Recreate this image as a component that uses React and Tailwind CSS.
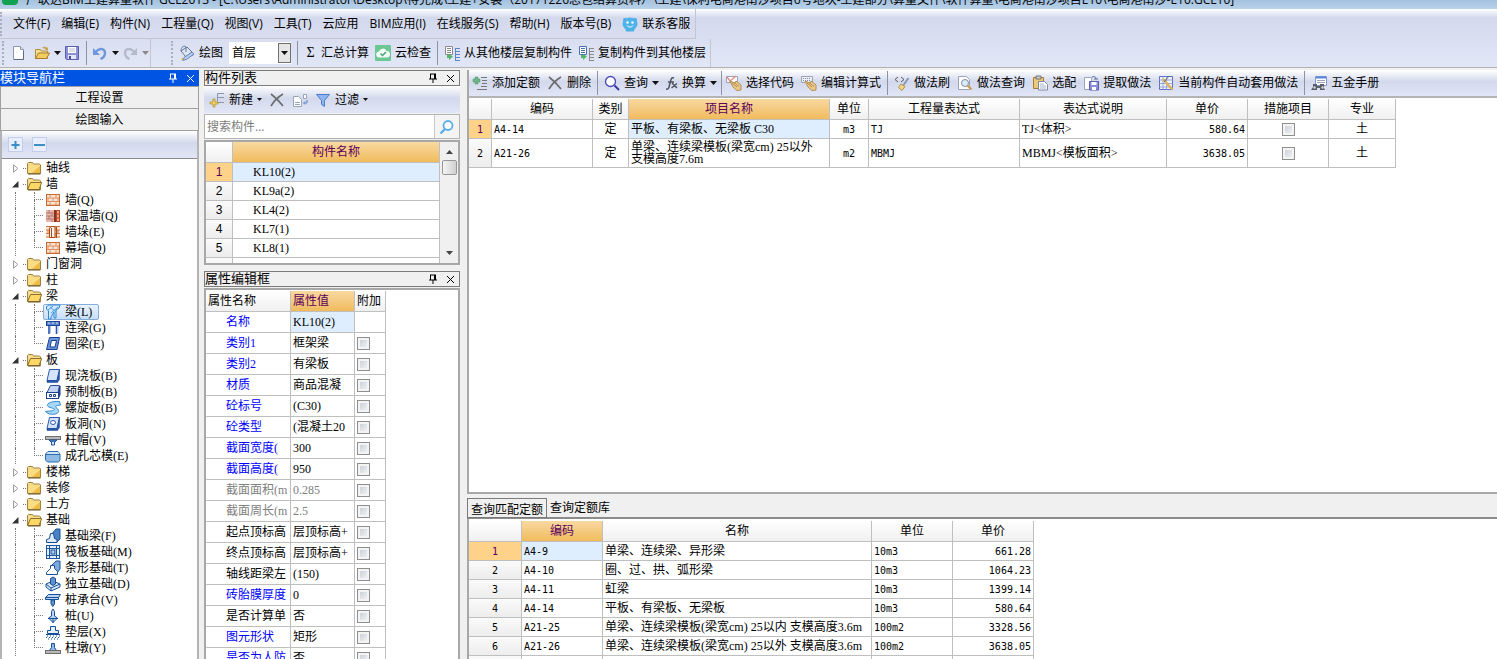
import { useState } from 'react';

const MENU_ITEMS = ['文件(F)', '编辑(E)', '构件(N)', '工程量(Q)', '视图(V)', '工具(T)', '云应用', 'BIM应用(I)', '在线服务(S)', '帮助(H)', '版本号(B)'];

const TREE = [
  { name: '轴线' },
  {
    name: '墙',
    children: [
      { name: '墙(Q)', icon: 'brick' },
      { name: '保温墙(Q)', icon: 'brickInsulated' },
      { name: '墙垛(E)', icon: 'brickPier' },
      { name: '幕墙(Q)', icon: 'brick' },
    ],
  },
  { name: '门窗洞' },
  { name: '柱' },
  {
    name: '梁',
    children: [
      { name: '梁(L)', icon: 'beam' },
      { name: '连梁(G)', icon: 'linkBeam' },
      { name: '圈梁(E)', icon: 'ringBeam' },
    ],
  },
  {
    name: '板',
    children: [
      { name: '现浇板(B)', icon: 'slab' },
      { name: '预制板(B)', icon: 'precast' },
      { name: '螺旋板(B)', icon: 'spiral' },
      { name: '板洞(N)', icon: 'slabHole' },
      { name: '柱帽(V)', icon: 'cap' },
      { name: '成孔芯模(E)', icon: 'core' },
    ],
  },
  { name: '楼梯' },
  { name: '装修' },
  { name: '土方' },
  {
    name: '基础',
    children: [
      { name: '基础梁(F)', icon: 'footBeam' },
      { name: '筏板基础(M)', icon: 'raft' },
      { name: '条形基础(T)', icon: 'strip' },
      { name: '独立基础(D)', icon: 'isolated' },
      { name: '桩承台(V)', icon: 'pileCap' },
      { name: '桩(U)', icon: 'pile' },
      { name: '垫层(X)', icon: 'cushion' },
      { name: '柱墩(Y)', icon: 'pier' },
    ],
  },
];

const COMPONENTS = ['KL10(2)', 'KL9a(2)', 'KL4(2)', 'KL7(1)', 'KL8(1)'];

const PROPS = [
  { name: '名称', value: 'KL10(2)', tone: 'blue', active: true },
  { name: '类别1', value: '框架梁', tone: 'blue' },
  { name: '类别2', value: '有梁板', tone: 'blue' },
  { name: '材质', value: '商品混凝', tone: 'blue' },
  { name: '砼标号', value: '(C30)', tone: 'blue' },
  { name: '砼类型', value: '(混凝土20', tone: 'blue' },
  { name: '截面宽度(', value: '300', tone: 'blue' },
  { name: '截面高度(', value: '950', tone: 'blue' },
  { name: '截面面积(m', value: '0.285', tone: 'gray' },
  { name: '截面周长(m', value: '2.5', tone: 'gray' },
  { name: '起点顶标高', value: '层顶标高+', tone: 'black' },
  { name: '终点顶标高', value: '层顶标高+', tone: 'black' },
  { name: '轴线距梁左', value: '(150)', tone: 'black' },
  { name: '砖胎膜厚度', value: '0', tone: 'blue' },
  { name: '是否计算单', value: '否', tone: 'black' },
  { name: '图元形状', value: '矩形', tone: 'blue' },
  { name: '是否为人防', value: '否', tone: 'blue' },
];

const TONES = { blue: 'text-[#0000ff]', gray: 'text-[#808080]', black: 'text-black' };
const VALUE_TONES = { blue: 'text-black', gray: 'text-[#808080]', black: 'text-black' };

const QUOTAS = [
  { code: 'A4-14', type: '定', name: '平板、有梁板、无梁板 C30', unit: 'm3', expr: 'TJ', note: 'TJ<体积>', price: '580.64', major: '土' },
  { code: 'A21-26', type: '定', name: '单梁、连续梁模板(梁宽cm) 25以外 支模高度7.6m', unit: 'm2', expr: 'MBMJ', note: 'MBMJ<模板面积>', price: '3638.05', major: '土' },
];

const MATCHES = [
  ['A4-9', '单梁、连续梁、异形梁', '10m3', '661.28'],
  ['A4-10', '圈、过、拱、弧形梁', '10m3', '1064.23'],
  ['A4-11', '虹梁', '10m3', '1399.14'],
  ['A4-14', '平板、有梁板、无梁板', '10m3', '580.64'],
  ['A21-25', '单梁、连续梁模板(梁宽cm) 25以内 支模高度3.6m', '100m2', '3328.56'],
  ['A21-26', '单梁、连续梁模板(梁宽cm) 25以外 支模高度3.6m', '100m2', '3638.05'],
];

const SONG = "font-['Liberation_Serif','Noto_Sans_CJK_SC',serif]";
const YAHEI = "font-['Open_Sans','Noto_Sans_CJK_SC',sans-serif]";
const MONO = "font-['DejaVu_Sans_Mono','Noto_Sans_CJK_SC',monospace] text-[10px]";

const BAR = 'bg-linear-to-b from-white from-0% via-[#d3d9ec] via-45% to-[#e1e7f6]';
const HEAD = 'bg-linear-to-b from-white to-[#f0f0f0] font-normal text-black';
const HEAD_ON = 'bg-linear-to-b from-[#f8d9a0] to-[#f0bb5c] font-normal text-[#5c005c]';
const NUM = 'bg-linear-to-b from-[#fafafa] to-[#ededed]';
const NUM_ON = 'bg-[#ffd28a] text-[#5c005c]';
const CELL = 'border-r border-b border-[#bfbfbf] p-0 leading-[13px]';

function Svg({ children, w = 16, h = 16 }) {
  return (
    <svg width={w} height={h} viewBox={`0 0 ${w} ${h}`} fill="none" aria-hidden="true" className="shrink-0">
      {children}
    </svg>
  );
}

/* ---- tree icons ---- */
const BRICK_LINES = 'M1 2.5h14M1 6h14M1 9.5h14M1 13h14M5 2.5V6M11 2.5V6M3 6v3.5M8 6v3.5M13 6v3.5M5 9.5V13M11 9.5V13';

const treeIcons = {
  brick: (
    <Svg>
      <rect x="1" y="2" width="14" height="12" fill="#fbe3cf" />
      <path d={BRICK_LINES} stroke="#dc9464" />
      <rect x="1.5" y="2.5" width="13" height="11" stroke="#c96a35" />
    </Svg>
  ),
  brickInsulated: (
    <Svg>
      <rect x="1" y="2" width="9" height="12" fill="#e8b7ac" />
      <path d="M1 5h9M1 8h9M1 11h9M4 2v3M7 5v3M4 8v3M7 11v3" stroke="#b4796e" />
      <rect x="9" y="2" width="2" height="12" fill="#8f2f1c" />
      <rect x="11.5" y="2.5" width="3" height="11" fill="#f3a37d" stroke="#b2492a" />
      <path d="M12 6h2M12 10h2" stroke="#b2492a" />
    </Svg>
  ),
  brickPier: (
    <Svg>
      <rect x="1" y="2" width="14" height="12" fill="#fbe3cf" />
      <path d={BRICK_LINES} stroke="#d07840" />
      <path d="M4.5 4.5 6 2.5h4v11H4.5zM6.5 4v10M11.5 3v11" fill="#fdeee2" stroke="#a94c1f" />
    </Svg>
  ),
  beam: (
    <Svg>
      <path d="M1.5 2.5 4 1h11l-1 3-3 2v8H9V8l-3 5v2H3.5V7L1.5 5z" fill="#d4e8fb" stroke="#2f86d6" />
      <path d="m3 6 5-4m-2 7 7-6M5 3l6 5" stroke="#3b9be4" />
    </Svg>
  ),
  linkBeam: (
    <Svg>
      <rect x="1.5" y="1.5" width="13" height="4" fill="#5d83cf" stroke="#1f4597" />
      <path d="M3 3h2M7 3h2M11 3h2" stroke="#cfe0fa" />
      <path d="M4 6v8M11.5 6v8" stroke="#2c56ad" strokeWidth="1.6" />
      <path d="M5.5 6v7M13 6v7" stroke="#a9c3ee" />
    </Svg>
  ),
  ringBeam: (
    <Svg>
      <path d="M4.5 1.5h10L12 13.5H1.5z" fill="#6c93dc" stroke="#17408f" />
      <path d="M6.5 4.500h5L10 11H5z" fill="#fff" stroke="#17408f" />
    </Svg>
  ),
  slab: (
    <Svg>
      <path d="M4.5 1.5h10L12 12.5H2z" fill="#d5e4fa" stroke="#2a58b0" />
      <path d="M2 12.5v2h10.5l2-3v-10L12 12.5z" fill="#2a58b0" stroke="#1d458f" strokeWidth=".5" />
    </Svg>
  ),
  precast: (
    <Svg>
      <path d="M5.5 1.5h9l-1.500 7H2z" fill="#c3d4f4" stroke="#2a4f9c" />
      <rect x="1.5" y="8.5" width="12" height="6" fill="#fff" stroke="#1c3f8c" />
      <path d="M13.5 8.5 15 2v9l-1.500 3" fill="#2a4f9c" stroke="#1c3f8c" />
      <path d="M4.5 10.5h2v2h-2zM8.5 10.5h2v2h-2z" stroke="#1c3f8c" />
    </Svg>
  ),
  spiral: (
    <Svg>
      <path d="M14.5 1.5C7 1 2 3 2.5 5.5S10 8 9.5 9.5 4 11 .5 11.5c2 3 10 4 12.500 1s-3-5-2.500-6 3-1 5-1.500z" fill="#a5d8f8" stroke="#3288cf" />
    </Svg>
  ),
  slabHole: (
    <Svg>
      <path d="M4.5 1.5h10L12 12.500H2z" fill="#d5e4fa" stroke="#2a58b0" />
      <path d="M2 12.500v2h10.500l2-3v-10L12 12.500z" fill="#2a58b0" stroke="#1d458f" strokeWidth=".5" />
      <ellipse cx="8" cy="6.500" rx="2.500" ry="2" fill="#fff" stroke="#2a58b0" />
    </Svg>
  ),
  cap: (
    <Svg>
      <rect x=".5" y="4.500" width="15" height="3" fill="#b9b9b9" stroke="#6d6d6d" />
      <path d="M4 8h8l-2 2H6z" fill="#5c8fd6" stroke="#1f4f9e" />
      <path d="M6.500 10v3h3v-3" fill="#d6e6fa" stroke="#1f4f9e" />
    </Svg>
  ),
  core: (
    <Svg>
      <path d="M3 3.500h10l2 2.500v6l-1.500 2h-11L.5 12V6z" fill="#8fbbe4" stroke="#2d6cab" />
      <path d="M1 6.500h14" stroke="#2d6cab" />
      <path d="M3 4h10l1.500 2h-13z" fill="#cfe4f8" />
    </Svg>
  ),
  footBeam: (
    <Svg>
      <path d="m5 8 6-7h4v10l-3 3" fill="#4a80c4" stroke="#17509a" />
      <path d="M5.500 5.500h3l1 5 2.500 1v3H1.500v-3l3-1z" fill="#dceafb" stroke="#17509a" />
    </Svg>
  ),
  raft: (
    <Svg>
      <rect x="1.500" y="1.500" width="13" height="13" fill="#e4effc" stroke="#1e569f" />
      <path d="M4.500 1v14M11.500 1v14M1 4.500h14M1 11.500h14" stroke="#1e569f" />
      <rect x="6" y="6" width="4" height="4" fill="#a9cbef" stroke="#1e569f" />
    </Svg>
  ),
  strip: (
    <Svg>
      <path d="m6 6 5-5h4v8l-3 4" fill="#7fa8d8" stroke="#17509a" />
      <path d="M5.500 5.500h4v3l3 3v3h-11v-2l4-4z" fill="#fff" stroke="#17509a" />
    </Svg>
  ),
  isolated: (
    <Svg>
      <path d="m1 8 7-3 7 3v3l-9 4-5-4z" fill="#d8e7f8" stroke="#17509a" />
      <path d="m1 8 5 4 9-4M6 12v3" stroke="#17509a" />
      <path d="M5.500 2.500 8 1l2.500 1.500V8L8 9.500 5.500 8z" fill="#5f8fcc" stroke="#17509a" />
    </Svg>
  ),
  pileCap: (
    <Svg>
      <path d="M3.500 2.500h12l-2 3v2H.5v-2z" fill="#bcd5f2" stroke="#17509a" />
      <path d="M.5 5.500h13" stroke="#17509a" />
      <path d="M6 8h3.500v4L7.800 14.500 6 12z" fill="#5f8fcc" stroke="#17509a" />
    </Svg>
  ),
  pile: (
    <Svg>
      <path d="M6.500 3.500 8 1l1.500 2.500V8l3 2-4.500 4.500L3.500 10l3-2z" fill="#bcd5f2" stroke="#17509a" />
      <path d="M3 10.500h10M8 11v4" stroke="#17509a" />
    </Svg>
  ),
  cushion: (
    <Svg>
      <path d="M5.500 2.500h5v4h3v3h-11v-3h3z" fill="#e4effc" stroke="#17509a" />
      <path d="M1 10.500h14" stroke="#17509a" />
      <path d="M2 12h13M1 13.500h13M3 15h10" stroke="#17509a" strokeDasharray="1 2" />
    </Svg>
  ),
  pier: (
    <Svg>
      <path d="M6.500 3.500h3v4l2 3h-7l2-3z" fill="#8fb7e8" stroke="#17509a" />
      <rect x=".5" y="10.500" width="15" height="3" fill="#b9b9b9" stroke="#6d6d6d" />
    </Svg>
  ),
};

function Folder({ open }) {
  return (
    <Svg>
      <path d="M1.500 13.500v-10l1-1h4l1 1.500h6l1 1v8.500z" fill="#f7dd8a" stroke="#a08240" />
      {open ? (
        <path d="m1.500 13.500 3-7h11.200l-2.700 7z" fill="#fbd768" stroke="#8f6f2c" />
      ) : (
        <>
          <path d="M2 13V5.500h12V13z" fill="#f9dc83" />
          <path d="m6 13 8-7v7z" fill="#eebb45" />
        </>
      )}
      <path d="M2 14h12.500" stroke="#6f5a2a" />
    </Svg>
  );
}

/* ---- toolbar icons ---- */
const Caret = ({ muted }) => (
  <Svg w={7} h={4}>
    <path d="M0 0h7L3.500 4z" fill={muted ? '#888' : '#111'} />
  </Svg>
);
const SmallCaret = () => (
  <Svg w={5} h={3}>
    <path d="M0 0h5L2.500 3z" fill="#111" />
  </Svg>
);
const IconNew = () => (
  <Svg>
    <path d="M3.500 1.500h7l3 3v10h-10z" fill="#fff" stroke="#8a97ad" />
    <path d="M10.500 1.500v3h3" fill="#dde5f3" stroke="#8a97ad" />
    <path d="M4 14.500h9.500V6" stroke="#5d6a83" />
  </Svg>
);
const IconOpen = () => (
  <Svg>
    <path d="M1.500 13.500V4.500h5l1 1.500h6v7.500z" fill="#f5dd95" stroke="#b38d3c" />
    <path d="m1.500 13.500 3-5.500h11l-3 5.500z" fill="#f4cd62" stroke="#a37c2b" />
    <path d="M8 3c2-2 4-1.500 5 0l1-1v3h-3l1-1" fill="#c9a04a" />
  </Svg>
);
const IconSave = () => (
  <Svg>
    <path d="M1.500 1.500h13v13h-12l-1-1z" fill="#8a8fd6" stroke="#5a5fae" />
    <rect x="4" y="2" width="8" height="6" fill="#fff" />
    <path d="M5 4h6M5 6h6" stroke="#b9bce0" />
    <rect x="4" y="10" width="8" height="4" fill="#e4e6f5" />
    <rect x="5" y="11" width="2" height="3" fill="#4a4f93" />
  </Svg>
);
const IconUndo = ({ muted }) => (
  <Svg>
    <g transform={muted ? 'matrix(-1 0 0 1 16 0)' : undefined}>
      <path d="M4 6.500c4-4 9-3 9 1.500 0 3-2 5-4.500 6" stroke={muted ? '#b4bac8' : '#6f95dd'} strokeWidth="2.400" />
      <path d="M1 3v7h7z" fill={muted ? '#b4bac8' : '#6f95dd'} />
    </g>
  </Svg>
);
const IconPaint = () => (
  <Svg>
    <path d="m2 6 6-4 5 5-6 5z" fill="#dfe7f3" stroke="#60779c" />
    <path d="M2 6c0-4 3-6 5-4v5" stroke="#60779c" />
    <path d="M13 7c1.500 2 1.500 4 .5 4S12 9 13 7z" fill="#4a7cc2" />
    <path d="m15 9-7 5-4 1.500 1-3 8-5.500z" fill="#b9cdf0" stroke="#6a84b8" />
    <path d="m2 15.500 1-3 2 2z" fill="#e3b04b" />
  </Svg>
);
const IconCloud = () => (
  <Svg>
    <rect width="16" height="16" rx="1" fill="#6cc795" />
    <path d="M4.500 12.500a3 3 0 0 1-.5-6 4 4 0 0 1 7.500-.5 3.200 3.200 0 0 1 .5 6.500z" fill="#f2fbf6" />
    <path d="m5.500 8.500 2 2 3.500-3.500" stroke="#46a673" strokeWidth="1.500" />
  </Svg>
);
const IconFloor = ({ flip }) => (
  <Svg>
    <path d="M1.500 1.500h7v8h-7z" fill="#fff" stroke={flip ? '#4e6fb5' : '#8a8a8a'} />
    <path d="M3 3.500h4M3 5.500h4M3 7.500h4" stroke={flip ? '#4e6fb5' : '#8a8a8a'} />
    <path d="M3 10v3h2v2l4-3.500L5 9v1z" fill="#55b76e" />
    <path d="M11.500 3v13M11.500 3.500H16M11.500 6.500H16M11.500 9.500H16M11.500 12.500H16M11.500 15.500H16" stroke={flip ? '#8b8b8b' : '#5c86c9'} />
  </Svg>
);
const IconMascot = () => (
  <Svg>
    <circle cx="3" cy="4" r="2" fill="#48a9e0" />
    <circle cx="13" cy="4" r="2" fill="#48a9e0" />
    <ellipse cx="8" cy="8" rx="7.500" ry="6.500" fill="#4fb3ea" />
    <path d="M3 11h10l-1 4.500H4z" fill="#4fb3ea" />
    <circle cx="5.500" cy="6.500" r="1.200" fill="#fff" />
    <circle cx="10.500" cy="6.500" r="1.200" fill="#fff" />
    <path d="M5 9.500c1.500 2 4.500 2 6 0" stroke="#fff" />
  </Svg>
);
const IconAdd = () => (
  <Svg>
    <path d="M3 2h3v2h2v3H6v2H3V7H1V4h2z" fill="#6fb488" stroke="#4f9469" strokeWidth=".5" />
    <path d="M9 2.500h6M10 5.500h5M10 8.500h5M9 11.500h6M5 14.500h10" stroke="#777" />
  </Svg>
);
const IconDelete = () => (
  <Svg>
    <path d="M2 2c4 3 8 7 12 12M14 2C9 5 5 9 2 14" stroke="#6b6b6b" strokeWidth="1.600" />
  </Svg>
);
const IconQuery = () => (
  <Svg>
    <circle cx="6.500" cy="6.500" r="5" fill="#fff" stroke="#4848b8" strokeWidth="1.300" />
    <path d="m10.500 10.500 4.500 4.500" stroke="#3a3aa0" strokeWidth="2" />
  </Svg>
);
const IconFx = () => (
  <Svg w={12}>
    <path d="M0 14c3 1 3-2 4-6s1.500-6 4-5M2 7h6M6 8l5 5M11 8.500 5.500 13" stroke="#4c5560" strokeWidth="1.500" />
  </Svg>
);
const IconHand = ({ grid }) => (
  <Svg>
    <path d="M.5 1.500h11v6H.5z" fill={grid ? '#eef1f8' : '#fff'} stroke="#98a3b8" />
    {grid ? <path d="M2 3.500h8M2 5.500h8" stroke="#7d8aa5" strokeDasharray="1 1" /> : <path d="m1 2 3 4 6-5" stroke="#e08a86" strokeWidth="1.400" />}
    <path d="m4 6 5 2 1-2 5 4v5l-4 .5L7 12z" fill="#ecc98a" stroke="#b58f52" />
    <path d="m6 8 5 4M8 7.500l5 4" stroke="#b58f52" />
  </Svg>
);
const IconBrush = () => (
  <Svg>
    <path d="M4 2 1 4.500 4 7M7 2l3 2.500L7 7" stroke="#555" />
    <path d="m14.500 3-5 7" stroke="#8898b5" strokeWidth="2" />
    <path d="m7 9 4 2.500-3 4-3.500-3z" fill="#efd489" stroke="#b3924a" />
  </Svg>
);
const IconPageFind = () => (
  <Svg>
    <path d="M1.500 1.500h8l3 3v10h-11z" fill="#fff" stroke="#9aa5ba" />
    <circle cx="8" cy="8" r="3.500" fill="#dcecf7" stroke="#7e8ea8" />
    <path d="m10.500 10.500 4 4" stroke="#d19a54" strokeWidth="2.200" />
  </Svg>
);
const IconPaste = () => (
  <Svg>
    <path d="M1.500 2.500h10v11h-10z" fill="#ecc878" stroke="#a97f33" />
    <path d="M4 1h5v3H4z" fill="#c9c9c9" stroke="#777" />
    <path d="M6.500 6.500h6l3 3v5.500h-9z" fill="#fff" stroke="#7c89a6" />
    <path d="M8 9h4M8 11h6M8 13h6" stroke="#a4b0c8" />
  </Svg>
);
const IconExtract = () => (
  <Svg>
    <path d="M1.500 2.500h7v12h-7z" fill="#fff" stroke="#9aa5ba" />
    <path d="M6.500 6.500h9v8.500h-9z" fill="#8a8fd6" stroke="#5a5fae" />
    <path d="M8.500 7h5v3h-5zM9 12h4v3H9z" fill="#fff" />
    <path d="M9 2c3-1 4 0 4 2m-2 0h4" stroke="#5b6f9c" />
  </Svg>
);
const IconAuto = () => (
  <Svg>
    <path d="M1.500 1.500h13v13h-13z" fill="#eef2fb" stroke="#5d6fc0" />
    <path d="M1.500 5h13M1.500 8.500h13M1.500 12h13M5 1.500v13M8.500 1.500v13" stroke="#9aa5da" />
    <path d="m5 4 8 9 1.500 1.500" stroke="#e0b45c" strokeWidth="2.400" />
    <path d="M11 1 6 7" stroke="#596579" />
  </Svg>
);
const IconHardware = () => (
  <Svg>
    <path d="M4.500 1.500h11v9h-11z" fill="#fff" stroke="#7f9bd6" />
    <path d="M5 2.500h10" stroke="#5b86dd" strokeWidth="2" />
    <path d="M6 5.500h8M6 7.500h8" stroke="#a0a8b8" />
    <path d="M2 9h4v2h3V9h4v4l1 2H9v-2H6v2H0l2-3z" fill="#5b6068" />
    <circle cx="3.500" cy="12.500" r="1.200" fill="#cfd3da" />
    <circle cx="11.500" cy="12.500" r="1.200" fill="#cfd3da" />
  </Svg>
);
const IconCreate = () => (
  <Svg>
    <path d="M15 1.500H8.500v4H15M8.500 5.500v4M7 10.500h8" stroke="#8a97ad" />
    <path d="M4 7h2v3h3v2H6v3H4v-3H1v-2h3z" fill="#f5d45e" stroke="#a98a2c" strokeWidth=".7" />
  </Svg>
);
const IconCopy = () => (
  <Svg>
    <path d="M1.500 4.500h5l3 3v7h-8z" fill="#fff" stroke="#9ba5b8" />
    <path d="M3 10.500h5M3 12.500h5" stroke="#9ba5b8" />
    <path d="M11.500 2.500h3v4h-3z" fill="#fff" stroke="#9ba5b8" />
    <path d="M15 8v3h-3m1-1.500L11.500 11l1.500 1.500" stroke="#5d84cc" />
  </Svg>
);
const IconFilter = () => (
  <Svg>
    <path d="M1.500 2.500h13l-5 6v6l-3-2v-4z" fill="#8fb4ee" stroke="#4d7dcc" />
  </Svg>
);
const IconSearch = () => (
  <Svg>
    <circle cx="9" cy="6.500" r="4.500" fill="#fff" stroke="#5aaeea" strokeWidth="1.800" />
    <path d="m6 10-4.500 4.500" stroke="#5aaeea" strokeWidth="2.400" />
  </Svg>
);

/* ---- shared pieces ---- */
function ToolButton({ icon, children, caret }) {
  return (
    <button className="flex shrink-0 items-center gap-1 whitespace-nowrap">
      {icon}
      {children}
      {caret}
    </button>
  );
}

const Sep = ({ className = '' }) => <span className={`h-6 w-px shrink-0 bg-[#8d93a3] ${className}`} />;
const Grip = () => <span className="h-6 w-0 shrink-0 border-l-2 border-dotted border-[#a9aebd]" />;

function PanelTitle({ title, active }) {
  return (
    <div className={`flex h-4 shrink-0 items-center ${active ? 'bg-[#0054e3] text-white' : 'border border-[#7b7b7b] bg-[#f0f0f0] text-black'}`}>
      <h2 className="flex-1 text-[13px] leading-[14px]">{title}</h2>
      <button aria-label="固定" className="mr-2">
        <Svg w={10} h={10}>
          <path d="M2.500 1v5M1 6h8M6.500 1v5M7.500 1v5M2 1h6M5 6v4" stroke="currentColor" />
        </Svg>
      </button>
      <button aria-label="关闭" className="mr-1">
        <Svg w={9} h={9}>
          <path d="m1 1 7 7M8 1 1 8" stroke="currentColor" />
        </Svg>
      </button>
    </div>
  );
}

function Check({ label }) {
  return (
    <input
      type="checkbox"
      aria-label={label}
      className="block size-[13px] appearance-none border border-[#8e8f8f] bg-linear-to-br from-[#c4cad3] to-[#f8f8f8] shadow-[inset_0_0_0_2px_#f4f4f4]"
    />
  );
}

function TreeGroup({ node, selected, onSelect }) {
  const open = Boolean(node.children);
  return (
    <li>
      <button className="flex h-4 items-center">
        <span className="flex w-[23px] justify-end pr-1">
          {open ? (
            <Svg w={7} h={7}><path d="M6.500 0v6.500H0z" fill="#333" /></Svg>
          ) : (
            <Svg w={7} h={9}><path d="M1.500.8v7.400L5.800 4.500z" fill="#fff" stroke="#999" /></Svg>
          )}
        </span>
        <span className="w-[3px] border-t border-dotted border-[#777]" />
        <Folder open={open} />
        <span className="pl-1 leading-4">{node.name}</span>
      </button>
      {open && (
        <ul>
          {node.children.map((child, i) => (
            <li key={child.name} className="flex h-4 pl-[15px]">
              <span className="w-[19px] border-l border-dotted border-[#777]" />
              <span className="flex w-[9px] flex-col">
                <span className="h-2 border-b border-l border-dotted border-[#777]" />
                {i < node.children.length - 1 && <span className="h-2 border-l border-dotted border-[#777]" />}
              </span>
              <button
                onClick={() => onSelect(child.name)}
                className={`flex items-center gap-1 rounded-xs border pr-1.5 pl-px leading-[14px] whitespace-nowrap ${
                  selected === child.name ? 'border-[#84acdd] bg-linear-to-b from-[#eaf3fe] to-[#c6defa]' : 'border-transparent'
                }`}
              >
                {treeIcons[child.icon]}
                {child.name}
              </button>
            </li>
          ))}
        </ul>
      )}
    </li>
  );
}

function Sidebar() {
  const [selected, setSelected] = useState('梁(L)');
  return (
    <aside className="flex w-[199px] shrink-0 flex-col">
      <PanelTitle title="模块导航栏" active />
      <button className="h-[23px] shrink-0 border border-[#a0a0a0] bg-[#f0f0f0] leading-5">工程设置</button>
      <button className="h-[22px] shrink-0 border border-t-0 border-[#a0a0a0] bg-[#f0f0f0] leading-5">绘图输入</button>
      <div className="flex min-h-0 flex-1 flex-col border-x-2 border-[#b4b4b4]">
        <div className={`flex h-7 shrink-0 items-center gap-2 border-b border-[#8c8c8c] pl-[6px] ${BAR}`}>
          <button aria-label="展开">
            <Svg><rect x=".5" y=".5" width="14" height="14" fill="#e9eefb" stroke="#c3cdf0" /><path d="M7.500 4v8M3.500 8h8" stroke="#3c8cc8" strokeWidth="2" /></Svg>
          </button>
          <button aria-label="折叠">
            <Svg><rect x=".5" y=".5" width="14" height="14" fill="#e9eefb" stroke="#c3cdf0" /><path d="M2 8h11" stroke="#3c8cc8" strokeWidth="2" /></Svg>
          </button>
        </div>
        <div className="min-h-0 flex-1 overflow-hidden bg-white pt-px">
          <ul className="-ml-[2px]">
            {TREE.map((node) => (
              <TreeGroup key={node.name} node={node} selected={selected} onSelect={setSelected} />
            ))}
          </ul>
        </div>
      </div>
    </aside>
  );
}

function ComponentList() {
  return (
    <section className="flex shrink-0 flex-col">
      <PanelTitle title="构件列表" />
      <div className={`flex h-[27px] items-center gap-[7px] pl-[5px] ${YAHEI} ${BAR}`}>
        <ToolButton icon={<IconCreate />} caret={<SmallCaret />}>新建</ToolButton>
        <button aria-label="删除"><IconDelete /></button>
        <button aria-label="复制"><IconCopy /></button>
        <ToolButton icon={<IconFilter />} caret={<SmallCaret />}>过滤</ToolButton>
      </div>
      <div className={`mt-px flex h-[25px] items-center border border-[#b4b4b4] bg-[#f4f4f4] ${YAHEI}`}>
        <input
          aria-label="搜索构件"
          placeholder="搜索构件..."
          className="h-full min-w-0 flex-1 border-r border-[#c8c8c8] bg-white px-0.5 placeholder:text-[#7d7d7d] focus:outline-none"
        />
        <button aria-label="搜索" className="px-1"><IconSearch /></button>
      </div>
      <div className="mt-px flex h-[125px] overflow-hidden border-2 border-[#a8a8a8] bg-white">
        <table className="w-[234px] table-fixed border-separate border-spacing-0 self-start">
          <colgroup>
            <col className="w-[27px]" />
            <col />
          </colgroup>
          <thead>
            <tr className="h-[21px]">
              <th className={`${CELL} ${HEAD}`} />
              <th className={`${CELL} ${HEAD_ON}`}>构件名称</th>
            </tr>
          </thead>
          <tbody>
            {[...COMPONENTS, ''].map((name, i) => (
              <tr key={name} className="h-[19px]">
                <td className={`${CELL} text-center font-['Liberation_Sans'] ${i === 0 ? NUM_ON : NUM}`}>{name && i + 1}</td>
                <td className={`${CELL} pl-5! ${i === 0 ? 'bg-[#dfeeff]' : ''}`}>{name}</td>
              </tr>
            ))}
          </tbody>
        </table>
        <div className="flex flex-1 flex-col items-center bg-[#f0f0f0] py-2">
          <Svg w={7} h={4}><path d="M0 4h7L3.500 0z" fill="#444" /></Svg>
          <span className="mt-[6px] h-[15px] w-[15px] rounded-xs border border-[#979797] bg-linear-to-r from-[#f4f4f4] to-[#d0d0d0]" />
          <span className="mt-auto"><Svg w={7} h={4}><path d="M0 0h7L3.500 4z" fill="#444" /></Svg></span>
        </div>
      </div>
    </section>
  );
}

function PropertyEditor() {
  return (
    <section className="mt-[6px] flex min-h-0 flex-1 flex-col">
      <PanelTitle title="属性编辑框" />
      <div className="mt-px min-h-0 flex-1 overflow-hidden border-2 border-b-0 border-[#a8a8a8] bg-white pt-px">
        <table className="w-[180px] table-fixed border-separate border-spacing-0">
          <colgroup>
            <col className="w-[85px]" />
            <col className="w-[64px]" />
            <col className="w-[31px]" />
          </colgroup>
          <thead>
            <tr className="h-[21px] text-left">
              <th className={`${CELL} pl-0.5! ${HEAD}`}>属性名称</th>
              <th className={`${CELL} pl-0.5! ${HEAD_ON}`}>属性值</th>
              <th className={`${CELL} pl-0.5! ${HEAD}`}>附加</th>
            </tr>
          </thead>
          <tbody>
            {PROPS.map((p) => (
              <tr key={p.name} className="h-[21px] whitespace-nowrap">
                <td className={`${CELL} overflow-hidden pl-5! ${TONES[p.tone]}`}>{p.name}</td>
                <td className={`${CELL} overflow-hidden pl-0.5! ${VALUE_TONES[p.tone]} ${p.active ? 'bg-[#dfeeff]' : ''}`}>{p.value}</td>
                <td className={`${CELL} pl-0.5!`}>{!p.active && <Check label={p.name} />}</td>
              </tr>
            ))}
          </tbody>
        </table>
      </div>
    </section>
  );
}

function QuotaToolbar() {
  return (
    <div className={`flex h-7 shrink-0 items-center gap-[7px] overflow-hidden border-b-2 border-[#b4b4b4] pl-[3px] ${YAHEI} ${BAR}`}>
      <ToolButton icon={<IconAdd />}>添加定额</ToolButton>
      <ToolButton icon={<IconDelete />}>删除</ToolButton>
      <Sep className="-mx-px" />
      <ToolButton icon={<IconQuery />} caret={<Caret />}>查询</ToolButton>
      <ToolButton icon={<IconFx />} caret={<Caret />}>换算</ToolButton>
      <Sep className="-mx-[3px]" />
      <ToolButton icon={<IconHand />}>选择代码</ToolButton>
      <ToolButton icon={<IconHand grid />}>编辑计算式</ToolButton>
      <Sep className="-mx-px" />
      <ToolButton icon={<IconBrush />}>做法刷</ToolButton>
      <ToolButton icon={<IconPageFind />}>做法查询</ToolButton>
      <ToolButton icon={<IconPaste />}>选配</ToolButton>
      <ToolButton icon={<IconExtract />}>提取做法</ToolButton>
      <ToolButton icon={<IconAuto />}>当前构件自动套用做法</ToolButton>
      <Sep className="-mx-px" />
      <ToolButton icon={<IconHardware />}>五金手册</ToolButton>
    </div>
  );
}

function QuotaTable() {
  return (
    <table className="mt-px w-[927px] table-fixed border-separate border-spacing-0">
      <colgroup>
        <col className="w-[23px]" />
        <col className="w-[101px]" />
        <col className="w-[36px]" />
        <col className="w-[201px]" />
        <col className="w-[39px]" />
        <col className="w-[151px]" />
        <col className="w-[147px]" />
        <col className="w-[81px]" />
        <col className="w-[81px]" />
        <col className="w-[67px]" />
      </colgroup>
      <thead>
        <tr className="h-[21px]">
          {['', '编码', '类别', '项目名称', '单位', '工程量表达式', '表达式说明', '单价', '措施项目', '专业'].map((h) => (
            <th key={h} className={`${CELL} ${h === '项目名称' ? HEAD_ON : HEAD}`}>{h}</th>
          ))}
        </tr>
      </thead>
      <tbody>
        {QUOTAS.map((q, i) => (
          <tr key={q.code} className={i === 0 ? 'h-[19px]' : 'h-[29px]'}>
            <td className={`${CELL} ${MONO} text-center ${i === 0 ? NUM_ON : NUM}`}>{i + 1}</td>
            <td className={`${CELL} ${MONO} pl-0.5!`}>{q.code}</td>
            <td className={`${CELL} text-center`}>{q.type}</td>
            <td className={`${CELL} px-0.5! leading-3! ${i === 0 ? 'bg-[#dfeeff]' : ''}`}>{q.name}</td>
            <td className={`${CELL} ${MONO} text-center`}>{q.unit}</td>
            <td className={`${CELL} ${MONO} pl-0.5!`}>{q.expr}</td>
            <td className={`${CELL} pl-0.5!`}>{q.note}</td>
            <td className={`${CELL} ${MONO} pr-0.5! text-right`}>{q.price}</td>
            <td className={CELL}><div className="flex justify-center"><Check label="措施项目" /></div></td>
            <td className={`${CELL} text-center`}>{q.major}</td>
          </tr>
        ))}
      </tbody>
    </table>
  );
}

function MatchTable() {
  return (
    <table className="w-[565px] table-fixed border-separate border-spacing-0">
      <colgroup>
        <col className="w-[53px]" />
        <col className="w-[81px]" />
        <col className="w-[269px]" />
        <col className="w-[81px]" />
        <col className="w-[81px]" />
      </colgroup>
      <thead>
        <tr className="h-[21px]">
          {['', '编码', '名称', '单位', '单价'].map((h) => (
            <th key={h} className={`${CELL} ${h === '编码' ? HEAD_ON : HEAD}`}>{h}</th>
          ))}
        </tr>
      </thead>
      <tbody>
        {MATCHES.map(([code, name, unit, price], i) => (
          <tr key={code} className="h-[19px]">
            <td className={`${CELL} ${MONO} text-center ${i === 0 ? NUM_ON : NUM}`}>{i + 1}</td>
            <td className={`${CELL} ${MONO} pl-0.5! ${i === 0 ? 'bg-[#dfeeff]' : ''}`}>{code}</td>
            <td className={`${CELL} pl-0.5! whitespace-nowrap`}>{name}</td>
            <td className={`${CELL} ${MONO} pl-0.5!`}>{unit}</td>
            <td className={`${CELL} ${MONO} pr-0.5! text-right`}>{price}</td>
          </tr>
        ))}
        <tr className="h-[19px]">
          <td className={`${CELL} ${NUM}`} />
          <td className={CELL} />
          <td className={CELL} />
          <td className={CELL} />
          <td className={CELL} />
        </tr>
      </tbody>
    </table>
  );
}

export default function App() {
  return (
    <div className={`flex h-screen flex-col overflow-hidden bg-[#f0f0f0] text-xs text-black ${SONG}`}>
      <header className={`flex h-[9px] shrink-0 items-end overflow-hidden bg-linear-to-b from-[#a3c1de] to-[#b9d2ea] ${YAHEI}`}>
        <span className="ml-[2px] h-[5px] w-4 shrink-0 self-start rounded-b-sm bg-[#12a150]" />
        <h1 className="ml-2 pb-[1px] leading-4 whitespace-nowrap">
          广联达BIM土建算量软件 GCL2013 - [C:\Users\Administrator\Desktop\待完成\土建+安装（20171226总包结算资料）\土建\保利电商港南沙项目6号地块-土建部分\算量文件\软件算量\电商港南沙项目E10\电商港南沙-E10.GCL10]
        </h1>
      </header>

      <div className={`flex shrink-0 flex-col items-start border-b border-[#b4b4b4] bg-linear-to-b from-white from-0% via-[#d3d9ec] via-15% to-[#e1e7f6] ${YAHEI}`}>
        <nav className="flex h-[30px] items-center gap-[11px] border-r border-b border-[#c4c6cf] pr-[5px]">
          <Grip />
          {MENU_ITEMS.map((item) => (
            <button key={item} className="whitespace-nowrap">{item}</button>
          ))}
          <ToolButton icon={<IconMascot />}>联系客服</ToolButton>
        </nav>
        <div className="flex h-7 items-center">
          <div className="flex h-full items-center border-r border-[#c4c6cf] pl-[2px]">
            <Grip />
            <button aria-label="新建" className="ml-[6px]"><IconNew /></button>
            <button aria-label="打开" className="ml-2 flex items-center gap-1"><IconOpen /><Caret /></button>
            <button aria-label="保存" className="ml-[3px]"><IconSave /></button>
            <Sep className="mr-[5px] ml-[6px]" />
            <button aria-label="撤销" className="flex items-center gap-1"><IconUndo /><Caret /></button>
            <button aria-label="重做" className="ml-[3px] flex items-center gap-1 pr-px"><IconUndo muted /><Caret muted /></button>
          </div>
          <div className="flex h-full items-center gap-[6px] border-r border-[#c4c6cf] pr-1 pl-5">
            <Grip />
            <ToolButton icon={<IconPaint />}>绘图</ToolButton>
            <label className="relative flex h-[22px] w-[62px] bg-white">
              <select aria-label="楼层" className="w-full appearance-none pl-[3px] focus:outline-none">
                <option>首层</option>
              </select>
              <span className="pointer-events-none absolute inset-y-px right-0 flex w-[13px] items-center justify-center border border-[#707070] bg-[#e6e6e6]">
                <Caret />
              </span>
            </label>
            <Sep />
            <ToolButton icon={<span className="w-[13px] text-center font-['Liberation_Serif'] text-sm leading-4">Σ</span>}>汇总计算</ToolButton>
            <ToolButton icon={<IconCloud />}>云检查</ToolButton>
            <Sep />
            <ToolButton icon={<IconFloor />}>从其他楼层复制构件</ToolButton>
            <ToolButton icon={<IconFloor flip />}>复制构件到其他楼层</ToolButton>
          </div>
        </div>
      </div>

      <main className="flex min-h-0 flex-1 pt-0.5">
        <Sidebar />
        <div className="ml-[5px] flex w-64 shrink-0 flex-col">
          <ComponentList />
          <PropertyEditor />
        </div>
        <div className="ml-[7px] flex min-w-0 flex-1 flex-col">
          <section className="flex min-h-0 flex-1 flex-col border-b-2 border-l-2 border-[#a8a8a8] bg-white">
            <QuotaToolbar />
            <QuotaTable />
          </section>
          <section className="flex h-[165px] shrink-0 flex-col overflow-hidden pt-1">
            <div className="flex h-[21px] shrink-0 items-start border-b-2 border-[#8c8c8c]" role="tablist">
              <button role="tab" aria-selected="true" className="h-5 border border-[#7b7b7b] px-[3px] pt-[3px] leading-4">查询匹配定额</button>
              <button role="tab" aria-selected="false" className="px-[3px] leading-5">查询定额库</button>
            </div>
            <div className="min-h-0 flex-1 overflow-hidden border-l-2 border-[#a8a8a8] bg-white pt-0.5">
              <MatchTable />
            </div>
          </section>
        </div>
      </main>
    </div>
  );
}
